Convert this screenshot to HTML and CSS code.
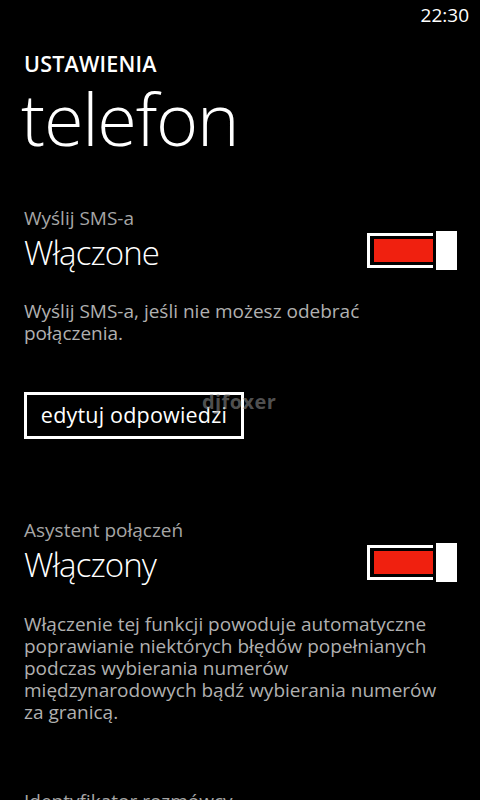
FILE: index.html
```html
<!DOCTYPE html>
<html lang="pl">
<head>
<meta charset="utf-8">
<title>telefon</title>
<link rel="stylesheet" href="styles.css">
</head>
<body>
<div class="phone">
  <div class="status"><span class="clock">22:30</span></div>
  <header class="title">
    <div class="app-name">USTAWIENIA</div>
    <h1 class="page-name">telefon</h1>
  </header>

  <section class="setting sms">
    <div class="label">Wyślij SMS-a</div>
    <div class="row">
      <div class="value">Włączone</div>
      <div class="toggle"><div class="track"><div class="fill"></div></div><div class="knob"></div></div>
    </div>
    <p class="desc">Wyślij SMS-a, jeśli nie możesz odebrać połączenia.</p>
    <div class="btn-wrap">
      <button class="btn">edytuj odpowiedzi</button>
      <span class="watermark">djfoxer</span>
    </div>
  </section>

  <section class="setting assist">
    <div class="label">Asystent połączeń</div>
    <div class="row">
      <div class="value">Włączony</div>
      <div class="toggle"><div class="track"><div class="fill"></div></div><div class="knob"></div></div>
    </div>
    <p class="desc">Włączenie tej funkcji powoduje automatyczne poprawianie niektórych błędów popełnianych podczas wybierania numerów międzynarodowych bądź wybierania numerów za granicą.</p>
  </section>

  <section class="setting next">
    <div class="label">Identyfikator rozmówcy</div>
  </section>
</div>
</body>
</html>
```

FILE: styles.css
```css
* { box-sizing: border-box; }
html, body {
  margin: 0;
  padding: 0;
  background: #000;
}
body {
  width: 480px;
  height: 800px;
  overflow: hidden;
  font-family: "Open Sans", "Noto Sans", sans-serif;
  color: #fff;
}
.phone {
  display: flex;
  flex-direction: column;
  padding: 0 24px;
}
.status {
  display: flex;
  justify-content: flex-end;
  height: 30px;
  padding-top: 4px;
  margin-right: -13px;
}
.clock {
  font-size: 19px;
  line-height: 22px;
  color: #fff;
}
.title {
  display: flex;
  flex-direction: column;
}
.app-name {
  margin-top: 21px;
  font-size: 21.5px;
  line-height: 25px;
  font-weight: 600;
  letter-spacing: 0.2px;
}
.page-name {
  margin: 2px 0 0 -3px;
  font-size: 72px;
  line-height: 80px;
  font-weight: 300;
  letter-spacing: -1.2px;
}
.setting {
  display: flex;
  flex-direction: column;
}
.sms { margin-top: 48px; }
.assist { margin-top: 79px; }
.next { margin-top: 66px; }
.label {
  font-size: 19px;
  line-height: 24px;
  color: #a6a6a6;
}
.row {
  display: flex;
  justify-content: space-between;
  align-items: flex-start;
  margin-top: 3px;
}
.value {
  font-size: 33px;
  line-height: 40px;
  font-weight: 300;
  letter-spacing: -0.9px;
}
.toggle {
  display: flex;
  align-items: center;
  gap: 3px;
  margin-right: -1px;
  margin-top: -2px;
}
.track {
  width: 66px;
  height: 35px;
  border: 3px solid #fff;
  border-right: 0;
  padding: 3px 0 3px 4px;
}
.fill {
  width: 100%;
  height: 100%;
  background: #f0200f;
}
.knob {
  width: 21px;
  height: 39px;
  background: #fff;
}
.desc {
  margin: 27px 0 0;
  font-size: 19px;
  line-height: 22px;
  color: #b0b0b0;
}
.assist .desc { margin-top: 28px; }
.btn-wrap {
  position: relative;
  display: flex;
  margin-top: 48px;
}
.btn {
  width: 220px;
  height: 47px;
  border: 3px solid #fff;
  background: #000;
  color: #fff;
  font-family: inherit;
  font-size: 21.5px;
  font-weight: 500;
  letter-spacing: 0.2px;
  padding: 0 0 3px;
  text-align: center;
}
.watermark {
  position: absolute;
  left: 178px;
  top: -4px;
  font-family: "Open Sans", sans-serif;
  font-size: 20px;
  font-weight: 700;
  letter-spacing: 0.4px;
  color: rgba(150, 150, 150, 0.55);
  pointer-events: none;
}
```
